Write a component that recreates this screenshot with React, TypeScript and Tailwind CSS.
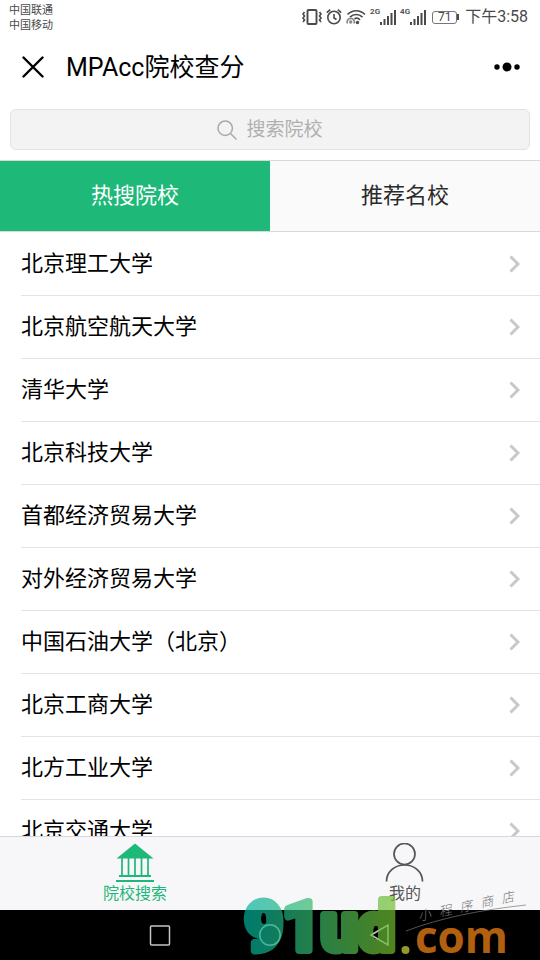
import { useState } from "react";

const hotSchools = [
  "北京理工大学",
  "北京航空航天大学",
  "清华大学",
  "北京科技大学",
  "首都经济贸易大学",
  "对外经济贸易大学",
  "中国石油大学（北京）",
  "北京工商大学",
  "北方工业大学",
  "北京交通大学",
];

function Signal({ label }: { label: string }) {
  return (
    <span className="flex items-start">
      <span className="text-[8px] leading-[8px] font-semibold">{label}</span>
      <svg className="mt-0.5 h-4 w-4" viewBox="0 0 16 16" fill="currentColor" aria-hidden="true">
        <rect x="0" y="12" width="2" height="3" />
        <rect x="3.500" y="9" width="2" height="6" />
        <rect x="7" y="6" width="2" height="9" />
        <rect x="10.500" y="3" width="2" height="12" />
        <rect x="14" y="0" width="2" height="15" />
      </svg>
    </span>
  );
}

function StatusBar() {
  return (
    <div className="flex h-9 items-start justify-between pr-3 pl-[9px] text-[#4a4a4a]">
      <div className="pt-[3px] text-[11px] leading-[15px]">
        <p>中国联通</p>
        <p>中国移动</p>
      </div>
      <div className="flex h-[34px] items-center">
        <svg className="h-[18px] w-5" viewBox="0 0 20 18" fill="none" stroke="currentColor" aria-hidden="true">
          <rect x="5.5" y="2" width="9" height="14" rx="1" strokeWidth="1.9" />
          <path d="M2.5 4l-1.500 2 1.500 2-1.500 2 1.500 2-1.500 2M17.500 4l1.500 2-1.500 2 1.500 2-1.500 2 1.500 2" strokeWidth="1.600" />
        </svg>
        <svg className="ml-1 h-[18px] w-4" viewBox="0 0 16 18" fill="none" stroke="currentColor" strokeWidth="1.600" aria-hidden="true">
          <circle cx="8" cy="9.500" r="6.200" />
          <path d="M8 6v4l2.500 1.500M0.800 4.700L4.200 1.700M15.200 4.700L11.800 1.700" />
        </svg>
        <svg className="ml-1 h-[18px] w-5" viewBox="0 0 20 18" fill="none" stroke="currentColor" strokeWidth="1.700" aria-hidden="true">
          <path d="M1.500 6.500c5-5 12.500-5 17.500 0M4 9.200c3.500-3.600 9-3.600 12.500 0M8.500 10.800c1.800-.9 3.900-.6 5.500 1" />
          <circle cx="11.500" cy="14.500" r="1.700" fill="currentColor" stroke="none" />
          <path d="M1.500 15.500a3.600 3.600 0 1 1 6.500 0" stroke="#8a8a8a" />
          <circle cx="4.700" cy="14" r="1.700" fill="#8a8a8a" stroke="none" />
        </svg>
        <span className="ml-1 flex gap-1">
          <Signal label="2G" />
          <Signal label="4G" />
        </span>
        <span className="flex items-center pl-1.5">
          <span className="flex h-[13px] w-[25px] items-center justify-center rounded-[3px] border border-[#777] text-xs leading-3">
            71
          </span>
          <span className="h-1.5 w-0.5 bg-current" />
        </span>
        <span className="pl-1.5 text-[16px] leading-5">下午3:58</span>
      </div>
    </div>
  );
}

function TitleBar() {
  return (
    <header className="flex h-[62px] items-center pr-[19px] pl-[22px] text-black">
      <button type="button" aria-label="关闭" className="h-[22px] w-[22px]">
        <svg viewBox="0 0 22 22" fill="none" stroke="currentColor" strokeWidth="2.400" strokeLinecap="round">
          <path d="M1.500 1.500l19 19M20.500 1.500l-19 19" />
        </svg>
      </button>
      <h1 className="ml-[22px] flex-1 pt-0.5 text-[25px] leading-8">MPAcc院校查分</h1>
      <button type="button" aria-label="更多" className="h-3 w-7">
        <svg viewBox="0 0 28 12" fill="currentColor">
          <circle cx="4" cy="6" r="2.700" />
          <circle cx="14" cy="6" r="4.500" />
          <circle cx="24" cy="6" r="2.700" />
        </svg>
      </button>
    </header>
  );
}

function SearchBar() {
  return (
    <div className="px-2.5 pt-[11px] pb-2.5">
      <label className="flex h-[41px] items-center justify-center gap-2.5 rounded-md border border-[#e2e2e2] bg-[#f3f3f3]">
        <svg className="h-5 w-5" viewBox="0 0 20 20" fill="none" stroke="#a9a9a9" strokeWidth="1.500" aria-hidden="true">
          <circle cx="8.200" cy="8.200" r="7.200" />
          <path d="M13.500 13.500l6 6" />
        </svg>
        <input
          type="text"
          aria-label="搜索院校"
          placeholder="搜索院校"
          className="w-[77px] bg-transparent text-[19px] leading-6 text-[#333] outline-none placeholder:text-[#b0b0b0]"
        />
      </label>
    </div>
  );
}

function SchoolTabs() {
  const [active, setActive] = useState(0);
  return (
    <div role="tablist" className="flex h-[72px] border-y border-[#d9d9d9]">
      {["热搜院校", "推荐名校"].map((name, i) => (
        <button
          key={name}
          type="button"
          role="tab"
          aria-selected={active === i}
          onClick={() => setActive(i)}
          className={
            active === i
              ? "flex-1 bg-[#1eb878] text-[22px] leading-8 text-white"
              : "flex-1 bg-[#fafafa] text-[22px] leading-8 text-[#2a2a2a]"
          }
        >
          {name}
        </button>
      ))}
    </div>
  );
}

function SchoolList() {
  return (
    <ul className="min-h-0 flex-1 overflow-y-auto pt-px pl-[21px] [scrollbar-width:none]">
      {hotSchools.map((school) => (
        <li key={school} className="border-b border-[#e3e3e3]">
          <a href="#school" className="flex h-[62px] items-center justify-between pr-5 text-[22px] leading-8 text-black">
            {school}
            <svg className="h-[18px] w-[11px]" viewBox="0 0 11 18" fill="none" stroke="#c7c7cc" strokeWidth="3" aria-hidden="true">
              <path d="M1.500 1.500L9 9l-7.500 7.500" />
            </svg>
          </a>
        </li>
      ))}
    </ul>
  );
}

function BottomNav() {
  return (
    <nav className="flex h-[74px] border-t border-[#d8d8da] bg-[#f7f7fa] text-[16px] leading-5">
      <a href="#search" className="flex flex-1 flex-col items-center gap-px pt-1.5 text-[#1eb878]">
        <svg className="h-10 w-10" viewBox="0 0 40 40" fill="none" stroke="currentColor" aria-hidden="true">
          <path d="M20 0.500L38.500 15.500h-37z" fill="currentColor" stroke="none" />
          <path d="M7 15v17M13.500 15v17M20 15v17M26.500 15v17M33 15v17" strokeWidth="1.700" />
          <path d="M4 33h32M1 38h38" strokeWidth="1.800" />
        </svg>
        院校搜索
      </a>
      <a href="#me" className="flex flex-1 flex-col items-center gap-px pt-1.5 text-[#555]">
        <svg className="h-10 w-10" viewBox="0 0 40 40" fill="none" stroke="currentColor" strokeWidth="1.700" aria-hidden="true">
          <circle cx="19.500" cy="11" r="10.500" />
          <path d="M1.500 38.500c0-9.500 8-16.500 18-16.500s18 7 18 16.500" />
        </svg>
        我的
      </a>
    </nav>
  );
}

function SystemKeys() {
  return (
    <div className="flex h-[50px] items-center justify-center gap-[88px] bg-black text-[#c4c4c4]">
      <button type="button" aria-label="最近任务" className="h-6 w-[22px]">
        <svg viewBox="0 0 22 24" fill="none" stroke="currentColor" strokeWidth="1.500">
          <rect x="1.500" y="3" width="19" height="19" rx="1" />
        </svg>
      </button>
      <button type="button" aria-label="主页" className="h-6 w-[22px]">
        <svg viewBox="0 0 22 24" fill="none" stroke="currentColor" strokeWidth="1.500">
          <circle cx="11" cy="12" r="10.200" />
        </svg>
      </button>
      <button type="button" aria-label="返回" className="h-6 w-[22px]">
        <svg viewBox="0 0 22 24" fill="none" stroke="currentColor" strokeWidth="1.500">
          <path d="M2 12L19 2v20z" />
        </svg>
      </button>
    </div>
  );
}

function Watermark() {
  return (
    <div className="pointer-events-none absolute right-0 bottom-0 h-[76px] w-[300px]">
      <svg className="h-full w-full" viewBox="0 0 300 76">
        <defs>
          <linearGradient id="brand" gradientUnits="userSpaceOnUse" x1="3" y1="0" x2="153" y2="0">
            <stop offset="0" stopColor="#00b1a0" />
            <stop offset="1" stopColor="#72bf2e" />
          </linearGradient>
        </defs>
        <g opacity="0.69">
          <text
            x="5"
            y="66"
            fontSize="66"
            fontWeight="700"
            fill="url(#brand)"
            stroke="url(#brand)"
            strokeWidth="8"
            strokeLinejoin="round"
            className="font-[Roboto,sans-serif]"
          >
            91ud
          </text>
          <circle cx="165.500" cy="66" r="4" fill="#d7dc3a" />
          <text x="175" y="69" fontSize="44" fontWeight="700" fill="#ff8b17" className="font-['Open_Sans',sans-serif]">
            com
          </text>
        </g>
        <path d="M166 47C200 34 240 26 286 21" fill="none" stroke="#777" strokeWidth="0.700" />
      </svg>
      <p className="absolute top-[15px] right-[25px] flex w-[98px] -rotate-12 justify-between text-[13px] leading-4 font-light text-[#777] italic">
        <span>小</span>
        <span>程</span>
        <span>序</span>
        <span>商</span>
        <span>店</span>
      </p>
    </div>
  );
}

export default function App() {
  return (
    <div className="relative flex h-screen flex-col overflow-hidden bg-white font-[Roboto,'Noto_Sans_CJK_SC',sans-serif]">
      <StatusBar />
      <TitleBar />
      <SearchBar />
      <SchoolTabs />
      <SchoolList />
      <BottomNav />
      <SystemKeys />
      <Watermark />
    </div>
  );
}
